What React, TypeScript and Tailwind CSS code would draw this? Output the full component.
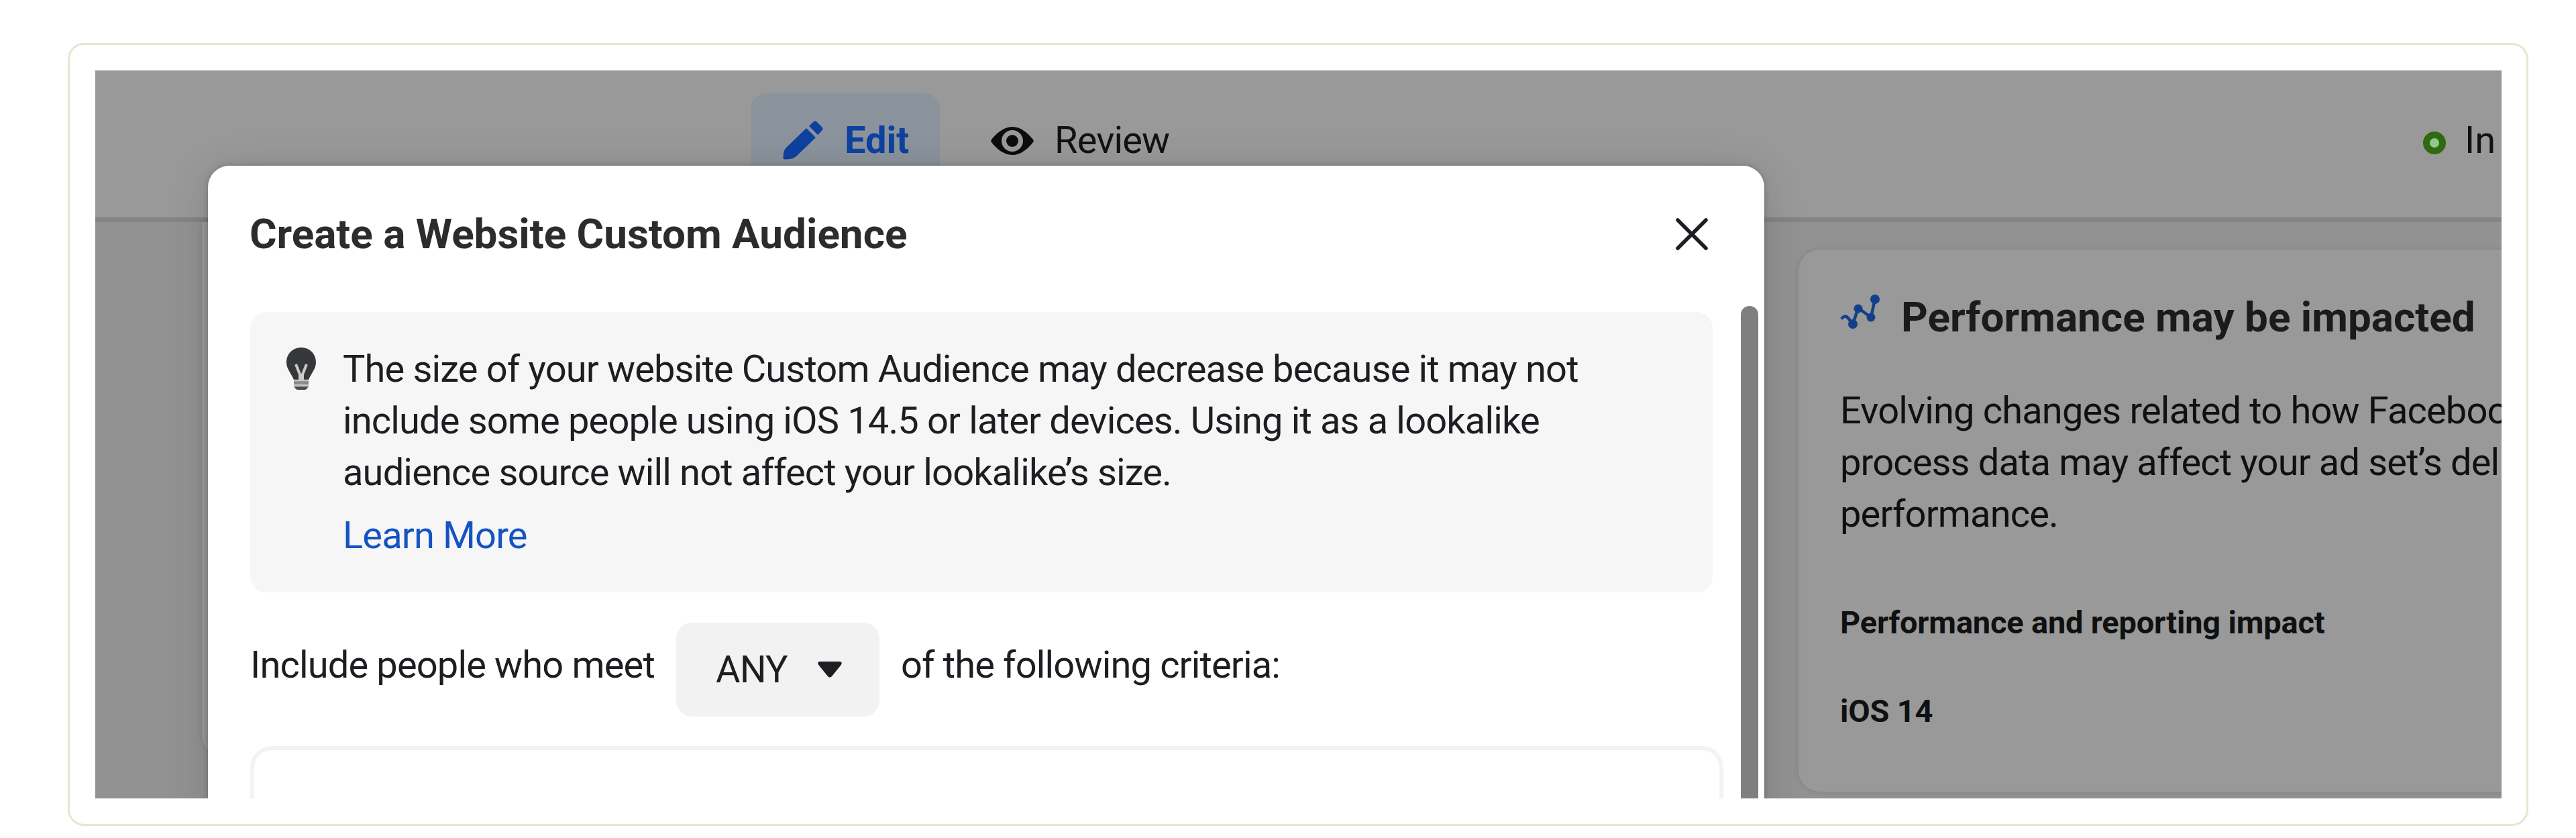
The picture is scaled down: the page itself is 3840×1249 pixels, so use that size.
import React from "react";

const PencilIcon = () => (
  <svg className="h-[60px] w-[62px]" viewBox="0 0 62 60" fill="#0e42a0">
    <path d="M36 12 L50 26 L21 54 Q17 57.500 12 58 L5 58.500 Q1 59 1.500 55 L2 49 Q2.500 45 6 41 Z" />
    <path d="M40 9 L46 3 Q49 0 52 3 L59 10 Q62 13 59 16 L53 22 Z" />
  </svg>
);

const EyeIcon = () => (
  <svg className="h-[44px] w-[64px]" viewBox="0 0 64 44">
    <path
      d="M32 1 C19 1 8 11 1 20 Q-0.500 22 1 24 C8 33 19 43 32 43 C45 43 56 33 63 24 Q64.500 22 63 20 C56 11 45 1 32 1 Z"
      fill="#0b0c0e"
    />
    <circle cx="32" cy="22" r="16" fill="#999" />
    <circle cx="32" cy="22" r="9" fill="#0b0c0e" />
  </svg>
);

const CloseIcon = () => (
  <svg className="h-[48px] w-[48px]" viewBox="0 0 48 48" stroke="#1c1e21" strokeWidth="5.500" strokeLinecap="round">
    <path d="M3 3 L45 45 M45 3 L3 45" />
  </svg>
);

const BulbIcon = () => (
  <svg className="h-[64px] w-[44px]" viewBox="0 0 44 64" fill="none">
    <path
      d="M22 0 C9 0 0 10 0 22 C0 32 7 38 11 48 H33 C37 38 44 32 44 22 C44 10 35 0 22 0 Z"
      fill="#36373a"
    />
    <path d="M14 25 L20 40 V48 M30 25 L24 40 V48" stroke="#c9c9c9" strokeWidth="4" />
    <path d="M11 48 H33 V57 Q32 63 26 63 H18 Q12 63 11 57 Z" fill="#8a8a8b" />
    <path d="M11 49 H33 M11 56 H33" stroke="#c4c4c4" strokeWidth="2.500" />
    <path d="M13 59 H31 Q30 63 26 63 H18 Q14 63 13 59 Z" fill="#4a4b4d" />
  </svg>
);

const TrendIcon = () => (
  <svg className="h-[54px] w-[60px]" viewBox="0 0 60 54" fill="#133f8a" stroke="#133f8a">
    <path
      d="M3 36 Q8 31 12 36 L19 45 L27 21 L46 35 L52 8"
      fill="none"
      strokeWidth="4.500"
      strokeLinecap="round"
      strokeLinejoin="round"
    />
    <g stroke="none">
      <circle cx="19" cy="45" r="7" />
      <circle cx="27" cy="22" r="6.500" />
      <circle cx="46" cy="35" r="6.500" />
      <circle cx="52" cy="8" r="7" />
    </g>
  </svg>
);

const TopBar = () => (
  <header className="flex h-[226px] items-start border-b-[7px] border-[#848484] bg-[#999] pt-[34px] text-[56px] leading-[64px]">
    <div className="ml-[977px] flex h-[152px] w-[282px] items-start rounded-[24px] bg-[#8b939c] pt-[38px] pl-[47px]">
      <div className="pt-[2px]">
        <PencilIcon />
      </div>
      <span className="ml-[31px] font-bold text-[#0e42a0]">Edit</span>
    </div>
    <div className="mt-[38px] ml-[76px] flex items-start text-[#111214]">
      <div className="pt-[11px]">
        <EyeIcon />
      </div>
      <span className="ml-[31px] tracking-[-0.85px]">Review</span>
    </div>
    <div className="mt-[38px] ml-auto flex items-start text-[#111214]">
      <span className="mt-[19px] h-[34px] w-[34px] rounded-full border-[10px] border-[#306a10] bg-[#8fc98a]" />
      <span className="ml-[28px] w-[55px]">In</span>
    </div>
  </header>
);

const PerformanceCard = () => (
  <aside className="mt-[41px] ml-[130px] h-[808px] w-[1400px] shrink-0 rounded-[32px] bg-[#999] pt-[61px] pl-[62px] text-[#0f1011] shadow-[0_0_8px_rgba(0,0,0,0.12)]">
    <div className="flex h-[80px] items-start">
      <div className="pt-[5px]">
        <TrendIcon />
      </div>
      <h2 className="ml-[31px] text-[62px] leading-[80px] font-bold text-[#1a1b1c]">Performance may be impacted</h2>
    </div>
    <p className="mt-[61px] text-[56px] leading-[77px] tracking-[-0.85px] whitespace-nowrap">
      Evolving changes related to how Facebook
      <br />
      process data may affect your ad set’s delivery
      <br />
      performance.
    </p>
    <h3 className="mt-[87px] text-[47px] leading-[72px] font-bold tracking-[-0.2px]">
      Performance and reporting impact
    </h3>
    <h3 className="mt-[60px] text-[47px] leading-[72px] font-bold tracking-[-0.2px]">iOS 14</h3>
  </aside>
);

const AudienceDialog = () => (
  <div className="absolute top-[142px] left-[168px] h-[1100px] w-[2320px] rounded-[32px] bg-white text-[#1c1e21] shadow-[0_8px_64px_rgba(0,0,0,0.14),0_0_8px_rgba(0,0,0,0.2)]">
    <div className="flex items-center justify-between pt-[62px] pr-[84px] pl-[62px]">
      <h1 className="text-[62px] leading-[80px] font-bold text-[#2b2c2e]">Create a Website Custom Audience</h1>
      <CloseIcon />
    </div>
    <div className="flex">
      <div className="mt-[76px] ml-[63px] w-[2196px]">
        <div className="flex h-[418px] w-[2180px] items-start rounded-[24px] bg-[#f6f6f6] pt-[47px] pl-[54px]">
          <div className="pt-[6px]">
            <BulbIcon />
          </div>
          <div className="ml-[40px] text-[56px] leading-[77px] tracking-[-0.85px] whitespace-nowrap">
            <p>
              The size of your website Custom Audience may decrease because it may not
              <br />
              include some people using iOS 14.5 or later devices. Using it as a lookalike
              <br />
              audience source will not affect your lookalike’s size.
            </p>
            <a className="mt-[17px] block text-[#1553c4]">Learn More</a>
          </div>
        </div>
        <div className="mt-[45px] flex h-[140px] items-start text-[56px] leading-[64px] tracking-[-0.85px]">
          <span className="mt-[31px] w-[635px]">Include people who meet</span>
          <button className="flex h-[140px] w-[303px] items-center rounded-[24px] bg-[#f2f2f2] pl-[59px]">
            <span>ANY</span>
            <svg className="ml-[45px] h-[24px] w-[36px]" viewBox="0 0 36 24" fill="#1c1e21">
              <path d="M3 0 H33 Q38 1 34 6 L21 22 Q18 25 15 22 L2 6 Q-2 1 3 0 Z" />
            </svg>
          </button>
          <span className="mt-[31px] ml-[32px]">of the following criteria:</span>
        </div>
        <div className="mt-[44px] h-[140px] w-full rounded-[32px] border-[6px] border-[#f3f3f3]" />
      </div>
      <div className="mt-[67px] ml-[26px] h-[900px] w-[26px] rounded-full bg-[#7f7f7f]" />
    </div>
  </div>
);

export default function App() {
  return (
    <div className="h-[1249px] w-[3840px] overflow-hidden bg-white pt-[64px] pl-[101px] font-[Roboto,sans-serif]">
      <div className="h-[1167px] w-[3668px] rounded-[24px] border-[3px] border-[#e9e5cf] pt-[38px] pl-[38px]">
        <div className="relative h-[1085px] w-[3587px] overflow-hidden bg-[#929292]">
          <TopBar />
          <div className="flex items-start">
            {/* form card, mostly hidden behind the dialog */}
            <div className="ml-[159px] h-[797px] w-[2250px] shrink-0 rounded-b-[32px] bg-[#999] shadow-[0_0_8px_rgba(0,0,0,0.12)]" />
            <PerformanceCard />
          </div>
          <AudienceDialog />
        </div>
      </div>
    </div>
  );
}
